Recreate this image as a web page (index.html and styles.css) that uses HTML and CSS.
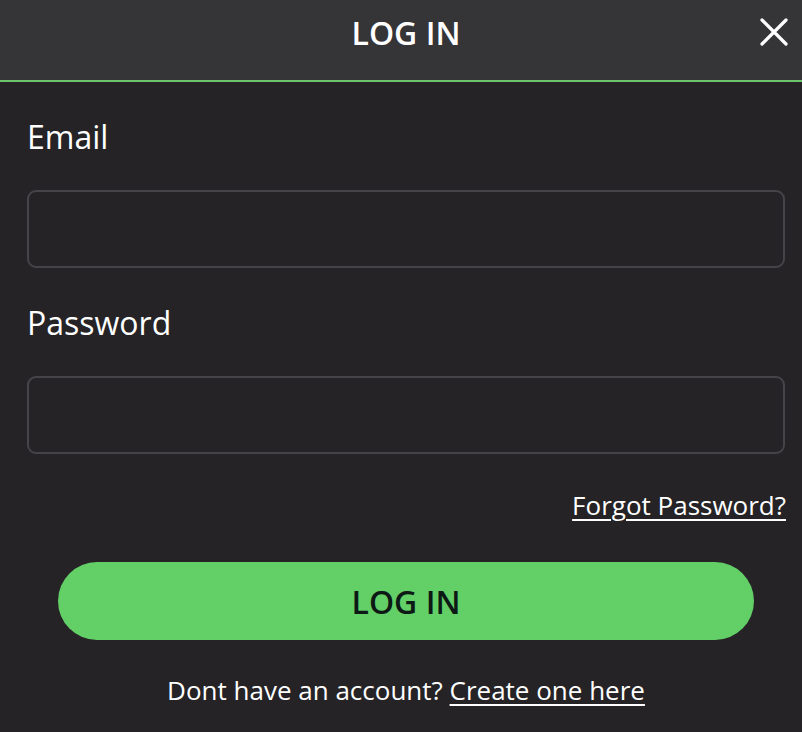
FILE: index.html
```html
<!DOCTYPE html>
<html lang="en">
<head>
<meta charset="utf-8">
<title>Log In</title>
<link rel="stylesheet" href="styles.css">
</head>
<body>
<header class="header">
  <h1 class="title">LOG IN</h1>
  <button class="close" aria-label="Close">
    <svg width="28" height="28" viewBox="0 0 28 28"><path d="M2 2 L26 26 M26 2 L2 26" stroke="#ffffff" stroke-width="3.2" stroke-linecap="round" fill="none"/></svg>
  </button>
</header>
<main class="content">
  <label class="label" for="email">Email</label>
  <input class="field" id="email" type="email">
  <label class="label label-pw" for="pw">Password</label>
  <input class="field" id="pw" type="password">
  <div class="forgot-row"><a class="link forgot" href="#">Forgot Password?</a></div>
  <div class="btn-row"><button class="login-btn">LOG IN</button></div>
  <p class="signup">Dont have an account? <a class="link" href="#">Create one here</a></p>
</main>
</body>
</html>
```

FILE: styles.css
```css
html, body {
  margin: 0;
  padding: 0;
  background: #252326;
  font-family: "Open Sans", "Noto Sans", sans-serif;
  color: #ffffff;
}
.header {
  position: relative;
  box-sizing: border-box;
  height: 82px;
  background: #353437;
  border-bottom: 2px solid #6cc46b;
  display: flex;
  align-items: flex-start;
  justify-content: center;
  padding: 13px 17px 0 27px;
}
.title {
  margin: 0;
  font-size: 32px;
  font-weight: 600;
  line-height: 40px;
}
.close {
  position: absolute;
  right: 14px;
  top: 18px;
  width: 28px;
  height: 28px;
  padding: 0;
  border: none;
  background: transparent;
  display: flex;
}
.content {
  display: flex;
  flex-direction: column;
  padding: 34px 17px 0 27px;
}
.label {
  font-size: 32px;
  line-height: 42px;
  margin-bottom: 32px;
}
.label-pw {
  margin-top: 34px;
}
.field {
  box-sizing: border-box;
  height: 78px;
  width: 100%;
  background: #252326;
  border: 2px solid #464448;
  border-radius: 9px;
  margin: 0;
  outline: none;
}
.forgot-row {
  display: flex;
  justify-content: flex-end;
  margin-top: 33px;
  margin-right: -1px;
}
.link {
  color: #ffffff;
  text-decoration: underline;
  text-underline-offset: 4px;
  text-decoration-thickness: 2px;
}
.forgot {
  font-size: 26px;
  line-height: 36px;
}
.btn-row {
  display: flex;
  justify-content: center;
  padding: 0 31px;
  margin-top: 39px;
}
.login-btn {
  width: 100%;
  height: 78px;
  border: none;
  border-radius: 39px;
  background: #63cf67;
  color: #0c1914;
  font-family: "Open Sans", "Noto Sans", sans-serif;
  font-size: 32px;
  font-weight: 600;
}
.signup {
  margin: 32px 0 0;
  text-align: center;
  font-size: 26px;
  line-height: 36px;
}
```
